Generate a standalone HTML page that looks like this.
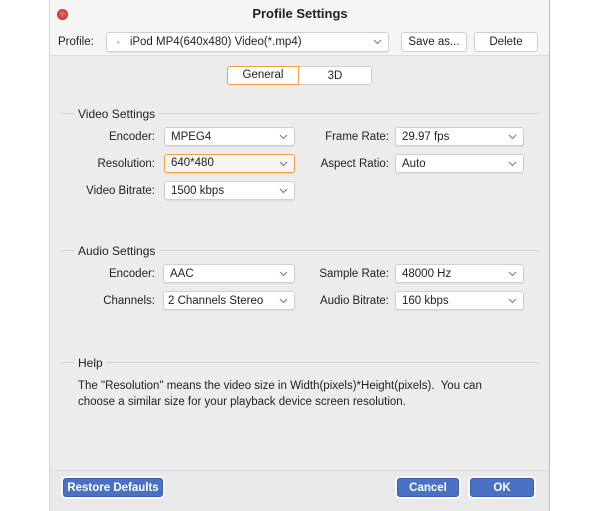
<!DOCTYPE html>
<html><head><style>
*{margin:0;padding:0;box-sizing:border-box}
html,body{width:600px;height:511px;overflow:hidden}
body{background:#fff;position:relative;font-family:"Liberation Sans",sans-serif;font-size:11.5px;color:#222}
.win{position:absolute;left:49px;top:0;width:501px;height:511px;background:#ececec;border-left:1px solid #d6d6d6;border-right:1px solid #bdbdbd;overflow:hidden}
.a{position:absolute;white-space:nowrap}
.box{position:absolute;background:#fff;border:1px solid #d0d0d0;border-radius:3px;height:19px;line-height:18px;padding-left:6px;box-shadow:0 1px 1px rgba(0,0,0,.08)}
.box svg{position:absolute;right:6px;top:6px}
.lbl{position:absolute;text-align:right;line-height:18px}
.btn{position:absolute;background:#fff;border:1px solid #cfcfcf;border-radius:3px;text-align:center;height:20px;line-height:19px}
.blue{position:absolute;background:#4a71c4;border:1px solid #3a5fae;border-radius:3px;color:#fff;font-weight:bold;text-align:center;height:19px;line-height:18px;box-shadow:0 0 0 2px #fafafa}
.sec{position:absolute;left:60px;width:480px;height:1px;background:#d2d2d2}
.sect{position:absolute;left:74px;background:#ececec;padding:0 4px;line-height:14px;font-size:12px}
</style></head><body>
<div class="win">
<div class="a" style="left:0;top:0;width:499px;height:56px;background:#f5f5f5;border-bottom:1px solid #dcdcdc"></div>
<div class="a" style="left:0;top:470px;width:499px;height:41px;background:#e9e9e9;border-top:1px solid #dedede"></div>
</div>
<div class="a" style="left:57px;top:9px;width:11px;height:11px;border-radius:50%;background:radial-gradient(circle at 50% 40%,#f46a5e,#c9302a);border:1px solid #b23a32"></div>
<div class="a" style="left:0;width:600px;top:6px;text-align:center;font-weight:bold;font-size:13px">Profile Settings</div>
<div class="a" style="left:58px;top:36px">Profile:</div>
<div class="box" style="left:106px;top:32px;width:283px;height:20px;line-height:19px;padding-left:10px"><span style="color:#aaa;font-size:8px;margin-right:10px">•</span>iPod MP4(640x480) Video(*.mp4)<svg width="9" height="6"><path d="M1 1l3.5 3.5L8 1" stroke="#777" fill="none"/></svg></div>
<div class="btn" style="left:401px;top:32px;width:66px">Save as...</div>
<div class="btn" style="left:474px;top:32px;width:64px">Delete</div>
<div class="btn" style="left:227px;top:66px;width:72px;height:19px;line-height:17px;border:1.5px solid #f0a040;border-radius:3px 0 0 3px">General</div>
<div class="btn" style="left:299px;top:66px;width:73px;height:19px;line-height:18px;border-radius:0 3px 3px 0;border-left:none">3D</div>

<div class="sec" style="top:113px"></div><div class="sect" style="top:107px">Video Settings</div>
<div class="lbl" style="left:60px;width:95px;top:128px">Encoder:</div>
<div class="lbl" style="left:60px;width:95px;top:155px">Resolution:</div>
<div class="lbl" style="left:60px;width:95px;top:182px">Video Bitrate:</div>
<div class="box" style="left:164px;top:127px;width:131px">MPEG4<svg width="9" height="6"><path d="M1 1l3.5 3.5L8 1" stroke="#777" fill="none"/></svg></div>
<div class="box" style="left:164px;top:154px;width:131px;border:1.5px solid #f0a040;background:#f5f5f5;line-height:17px">640*480<svg width="9" height="6"><path d="M1 1l3.5 3.5L8 1" stroke="#777" fill="none"/></svg></div>
<div class="box" style="left:164px;top:181px;width:131px">1500 kbps<svg width="9" height="6"><path d="M1 1l3.5 3.5L8 1" stroke="#777" fill="none"/></svg></div>
<div class="lbl" style="left:290px;width:99px;top:128px">Frame Rate:</div>
<div class="lbl" style="left:290px;width:99px;top:155px">Aspect Ratio:</div>
<div class="box" style="left:395px;top:127px;width:129px">29.97 fps<svg width="9" height="6"><path d="M1 1l3.5 3.5L8 1" stroke="#777" fill="none"/></svg></div>
<div class="box" style="left:395px;top:154px;width:129px">Auto<svg width="9" height="6"><path d="M1 1l3.5 3.5L8 1" stroke="#777" fill="none"/></svg></div>

<div class="sec" style="top:250px"></div><div class="sect" style="top:244px">Audio Settings</div>
<div class="lbl" style="left:60px;width:95px;top:265px">Encoder:</div>
<div class="lbl" style="left:60px;width:95px;top:292px">Channels:</div>
<div class="box" style="left:163px;top:264px;width:132px">AAC<svg width="9" height="6"><path d="M1 1l3.5 3.5L8 1" stroke="#777" fill="none"/></svg></div>
<div class="box" style="left:163px;top:291px;width:132px;padding-left:4px">2 Channels Stereo<svg width="9" height="6"><path d="M1 1l3.5 3.5L8 1" stroke="#777" fill="none"/></svg></div>
<div class="lbl" style="left:290px;width:99px;top:265px">Sample Rate:</div>
<div class="lbl" style="left:290px;width:99px;top:292px">Audio Bitrate:</div>
<div class="box" style="left:395px;top:264px;width:129px">48000 Hz<svg width="9" height="6"><path d="M1 1l3.5 3.5L8 1" stroke="#777" fill="none"/></svg></div>
<div class="box" style="left:395px;top:291px;width:129px">160 kbps<svg width="9" height="6"><path d="M1 1l3.5 3.5L8 1" stroke="#777" fill="none"/></svg></div>

<div class="sec" style="top:362px"></div><div class="sect" style="top:356px">Help</div>
<div class="a" style="left:78px;top:378px;line-height:16px">The "Resolution" means the video size in Width(pixels)*Height(pixels).&nbsp; You can<br>choose a similar size for your playback device screen resolution.</div>

<div class="blue" style="left:63px;top:478px;width:100px">Restore Defaults</div>
<div class="blue" style="left:397px;top:478px;width:62px">Cancel</div>
<div class="blue" style="left:470px;top:478px;width:64px">OK</div>
</body></html>
